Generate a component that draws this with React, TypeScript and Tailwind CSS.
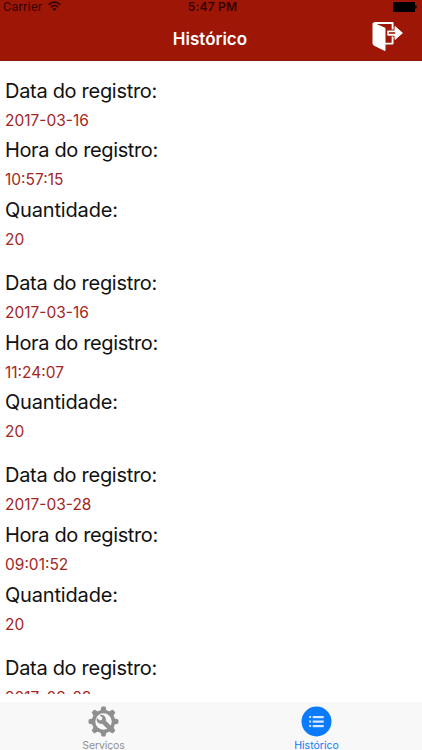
type Entry = { date: string; time: string; amount: string };

const entries: Entry[] = [
  { date: "2017-03-16", time: "10:57:15", amount: "20" },
  { date: "2017-03-16", time: "11:24:07", amount: "20" },
  { date: "2017-03-28", time: "09:01:52", amount: "20" },
];

const last = { date: "2017-03-28" };

function Field({ label, value, tracking }: { label: string; value: string; tracking: string }) {
  return (
    <div>
      <dt className={`h-[30px] text-[20px] leading-[30px] text-[#111] ${tracking}`}>{label}</dt>
      <dd className="h-[29.7px] text-[15.5px] leading-[29.7px] tracking-[0px] text-[#a4261d]">{value}</dd>
    </div>
  );
}

function WifiIcon() {
  return (
    <svg className="h-[11px] w-[13px]" viewBox="0 0 13 11" fill="none" stroke="#330502" strokeWidth="1.8">
      <path d="M0.8 3.6C4 0.4 9 0.4 12.2 3.6M3 6.1C5 4.1 8 4.1 10 6.1" />
      <path d="M4.4 7.8C5.7 6.7 7.3 6.7 8.6 7.8L6.5 10Z" fill="#330502" stroke="none" />
    </svg>
  );
}

function ExitIcon() {
  return (
    <svg className="h-[31px] w-[32px] shrink-0" viewBox="0 0 32 31" fill="none">
      <path d="M2 2H20.6V8.5M20.6 15.5V22.6H13" stroke="#fff" strokeWidth="1.9" strokeLinejoin="round" />
      <path d="M1 2L13 7.2V29.6L2 24.2Q1 23.7 1 22.6Z" fill="#fff" stroke="#fff" strokeWidth="1" strokeLinejoin="round" />
      <path d="M23 5.6L30.4 12L23 18.4Z" fill="#fff" stroke="#fff" strokeWidth="1" strokeLinejoin="round" />
      <path d="M16 10.2H24V13.9H16Z" fill="#b0453a" stroke="#fff" strokeWidth="1.6" strokeLinejoin="round" />
    </svg>
  );
}

function GearIcon() {
  return (
    <svg className="h-[31px] w-[31px] shrink-0" viewBox="0 0 32 32" fill="#8f8f8f">
      {[0, 45, 90, 135, 180, 225, 270, 315].map((a) => (
        <path key={a} d="M12.6 6L13.8 1.2Q14 .6 14.6 .6H17.4Q18 .6 18.2 1.2L19.4 6Z" transform={`rotate(${a} 16 16)`} />
      ))}
      <circle cx="16" cy="16" r="12" />
      <circle cx="16" cy="16" r="8.5" fill="#f8f8f8" />
      <path d="M12 9.2L15 12.1L14.3 14.4L12 15L9.1 12.1C8.1 15.7 11 19 14.6 18.2L20.2 23.8Q22.9 23.9 23.7 20.4L18.3 15.1C19.4 11.3 15.8 8 12 9.2Z" />
    </svg>
  );
}

function ListIcon() {
  return (
    <svg className="h-[31px] w-[31px] shrink-0" viewBox="0 0 31 31" fill="#d9eaff">
      <circle cx="15.5" cy="15.5" r="15" fill="#0b7bfb" />
      {[10, 14.5, 19].map((y) => (
        <g key={y}>
          <rect x="8.2" y={y} width="1.9" height="2" />
          <rect x="11.7" y={y} width="11" height="2.2" />
        </g>
      ))}
    </svg>
  );
}

export default function App() {
  return (
    <div className="flex h-[750px] w-[422px] flex-col overflow-hidden bg-white font-['Inter',sans-serif]">
      <header className="h-[61px] shrink-0 border-b border-[#8b1609] bg-[#9e1605]">
        <div className="grid h-[13px] grid-cols-3 items-center pl-[3px] text-[#330502]">
          <div className="flex items-center gap-[6px]">
            <span className="font-['Roboto',sans-serif] text-[12.5px] leading-[13px] tracking-[0.3px]">Carrier</span>
            <WifiIcon />
          </div>
          <span className="text-center text-[12px] leading-[13px] font-semibold tracking-[0.2px]">5:47 PM</span>
          <div className="flex items-center justify-end pr-[5px]">
            <div className="h-[10px] w-[22px] bg-black" />
            <div className="h-[4px] w-[2px] rounded-r bg-[#330502]" />
          </div>
        </div>
        <div className="grid h-[47px] grid-cols-[1fr_auto_1fr] items-center">
          <span />
          <h1 className="pt-[4px] pr-[2px] text-[17px] leading-[24px] font-semibold tracking-[0px] text-white">Histórico</h1>
          <div className="flex justify-end pr-[18px]">
            <ExitIcon />
          </div>
        </div>
      </header>
      <main className="h-[633px] shrink-0 overflow-hidden pt-[14.6px] pl-[5px]">
        {entries.map((entry, i) => (
          <dl key={i} className="mb-[13.3px]">
            <Field label="Data do registro:" value={entry.date} tracking="tracking-[-0.3px]" />
            <Field label="Hora do registro:" value={entry.time} tracking="tracking-[-0.37px]" />
            <Field label="Quantidade:" value={entry.amount} tracking="tracking-[-0.17px]" />
          </dl>
        ))}
        <dl>
          <Field label="Data do registro:" value={last.date} tracking="tracking-[-0.3px]" />
        </dl>
      </main>
      <nav className="mt-[8px] grid h-[48px] shrink-0 grid-cols-[207px_215px] overflow-hidden bg-[#f8f8f8] text-[10.5px] leading-[14px]">
        <div className="flex flex-col items-center pt-[4px] text-[#929292]">
          <GearIcon />
          <span className="mt-[2px] tracking-[-0.1px]">Serviços</span>
        </div>
        <div className="flex flex-col items-center pt-[4px] pl-[4px] text-[#0b7bfb]">
          <ListIcon />
          <span className="mt-[2px] tracking-[0px]">Histórico</span>
        </div>
      </nav>
    </div>
  );
}
